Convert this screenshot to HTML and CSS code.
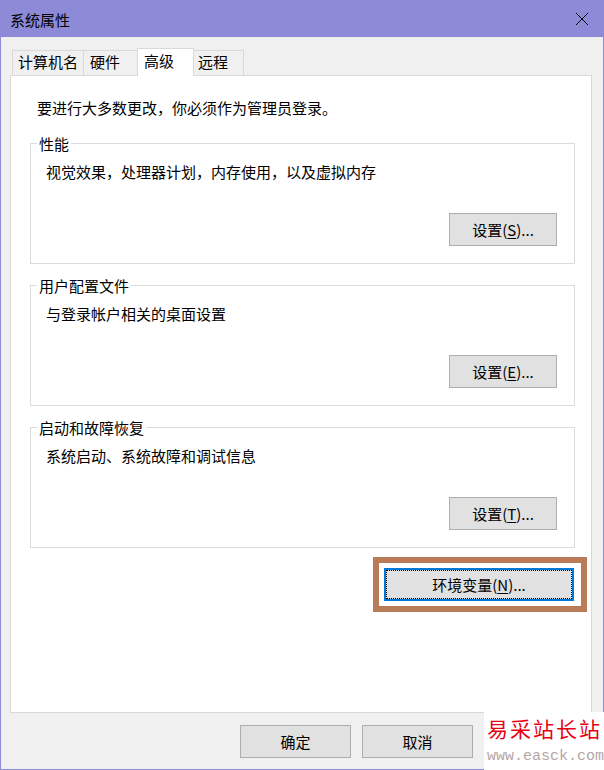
FILE: index.html
```html
<!DOCTYPE html>
<html lang="zh-CN">
<head>
<meta charset="utf-8">
<title>系统属性</title>
<link rel="stylesheet" href="styles.css">
</head>
<body>
<div class="window">
  <div class="titlebar">
    <span class="title">系统属性</span>
    <span class="close" aria-label="关闭"><svg width="12" height="12" viewBox="0 0 12 12" shape-rendering="crispEdges"><path d="M0 0 L12 12 M12 0 L0 12" stroke="#000" stroke-width="1" fill="none"/></svg></span>
  </div>
  <div class="body">
    <div class="tabs">
      <div class="tab tab-computer">计算机名</div>
      <div class="tab tab-hardware">硬件</div>
      <div class="tab tab-advanced active">高级</div>
      <div class="tab tab-remote">远程</div>
    </div>
    <div class="panel">
      <p class="intro">要进行大多数更改，你必须作为管理员登录。</p>
      <fieldset class="group">
        <legend>性能</legend>
        <p class="desc">视觉效果，处理器计划，内存使用，以及虚拟内存</p>
        <button class="btn btn-settings">设置(<u>S</u>)...</button>
      </fieldset>
      <fieldset class="group">
        <legend>用户配置文件</legend>
        <p class="desc">与登录帐户相关的桌面设置</p>
        <button class="btn btn-settings">设置(<u>E</u>)...</button>
      </fieldset>
      <fieldset class="group">
        <legend>启动和故障恢复</legend>
        <p class="desc">系统启动、系统故障和调试信息</p>
        <button class="btn btn-settings">设置(<u>T</u>)...</button>
      </fieldset>
      <button class="btn btn-env">环境变量(<u>N</u>)...</button>
    </div>
    <div class="footer">
      <button class="btn btn-footer">确定</button>
      <button class="btn btn-footer">取消</button>
    </div>
  </div>
  <div class="annotation"></div>
  <div class="watermark">
    <div class="wm-title">易采站长站</div>
    <div class="wm-url">www.easck.com</div>
  </div>
</div>
</body>
</html>
```

FILE: styles.css
```css
* { box-sizing: border-box; }
html, body { margin: 0; padding: 0; }
body {
  width: 604px;
  height: 770px;
  overflow: hidden;
  font-family: "Noto Sans CJK SC", "Microsoft YaHei", sans-serif;
  font-size: 15px;
  color: #000;
  background: #f0f0f0;
}
.window {
  position: relative;
  width: 604px;
  height: 770px;
  display: flex;
  flex-direction: column;
  background: #f0f0f0;
}
.titlebar {
  flex: none;
  height: 37px;
  background: #8d8ad7;
  display: flex;
  align-items: center;
  justify-content: space-between;
  padding: 0 16px 0 10px;
}
.title { line-height: 20px; padding-top: 2px; }
.close { display: flex; width: 12px; height: 12px; }
.body {
  flex: 1;
  display: flex;
  flex-direction: column;
  border: 1px solid #8d8ad7;
  border-top: none;
  padding: 11px 11px 11px 9px;
  min-height: 0;
}
.tabs {
  flex: none;
  height: 27px;
  display: flex;
  align-items: flex-end;
  padding-left: 2px;
  position: relative;
  z-index: 1;
}
.tab {
  height: 25px;
  border: 1px solid #d9d9d9;
  border-bottom: none;
  background: #f0f0f0;
  line-height: 20px;
  padding-top: 1px;
  margin-left: -1px;
  white-space: nowrap;
}
.tab-computer { width: 72px; padding-left: 5px; margin-left: 0; }
.tab-hardware { width: 55px; padding-left: 6px; }
.tab-advanced { width: 57px; padding-left: 6px; }
.tab-remote { width: 51px; padding-left: 4px; }
.tab.active {
  height: 28px;
  margin-bottom: -1px;
  background: #fff;
  padding-top: 2px;
  position: relative;
  z-index: 2;
}
.panel {
  flex: 1;
  background: #fff;
  border: 1px solid #d9d9d9;
  padding: 22px 16px 0 19px;
  display: flex;
  flex-direction: column;
}
.intro { margin: 0 0 0 7px; line-height: 20px; }
.group {
  margin: 11px 0 0;
  border: 1px solid #dcdcdc;
  padding: 8px 17px 17px 6px;
  display: flex;
  flex-direction: column;
  min-inline-size: 0;
}
.group:first-of-type { margin-top: 15px; }
.group legend { padding: 0 2px; line-height: 21px; }
.desc { margin: 0 0 0 9px; line-height: 20px; }
.btn {
  font: inherit;
  font-size: 15px;
  line-height: 20px;
  color: #000;
  background: #e1e1e1;
  border: 1px solid #adadad;
  padding: 0;
  height: 33px;
  display: flex;
  align-items: center;
  justify-content: center;
  white-space: nowrap;
}
.btn u { text-underline-offset: 2px; }
.btn-settings { width: 108px; margin-top: 31px; align-self: flex-end; }
.btn-env {
  width: 190px;
  margin: 20px 1px 0 0;
  align-self: flex-end;
  border: 2px solid #0078d7;
  outline: 1px dotted #000;
  outline-offset: -3px;
}
.footer {
  flex: none;
  display: flex;
  justify-content: flex-end;
  gap: 11px;
  margin-top: 12px;
  padding-right: 119px;
}
.btn-footer { width: 111px; }
.annotation {
  position: absolute;
  left: 373px;
  top: 557px;
  width: 214px;
  height: 55px;
  border: 6px solid #b97b58;
  pointer-events: none;
}
.watermark {
  position: absolute;
  left: 484px;
  top: 712px;
  width: 120px;
  height: 58px;
  background: #fff;
  padding: 4px 0 0 3px;
}
.wm-title {
  font-size: 21px;
  line-height: 24px;
  letter-spacing: 2px;
  color: #e60012;
  white-space: nowrap;
}
.wm-url {
  margin-top: 9px;
  font-family: "Liberation Mono", "DejaVu Sans Mono", monospace;
  font-size: 15px;
  line-height: 16px;
  color: #b4a6a6;
  white-space: nowrap;
}
```
